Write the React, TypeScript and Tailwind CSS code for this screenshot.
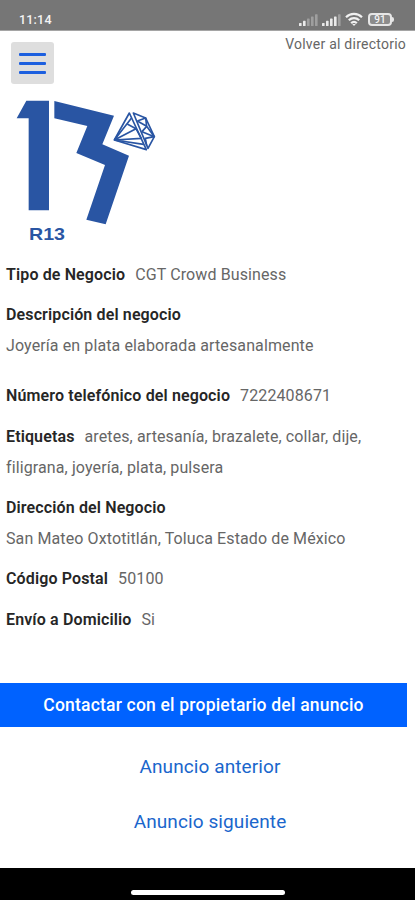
import React from "react";

interface Field {
  label: string;
  value: string;
  stacked?: boolean;
  className?: string;
}

const fields: Field[] = [
  { label: "Tipo de Negocio", value: "CGT Crowd Business" },
  {
    label: "Descripción del negocio",
    value: "Joyería en plata elaborada artesanalmente",
    stacked: true,
    className: "mb-2.5",
  },
  { label: "Número telefónico del negocio", value: "7222408671" },
  {
    label: "Etiquetas",
    value:
      "aretes, artesanía, brazalete, collar, dije, filigrana, joyería, plata, pulsera",
  },
  {
    label: "Dirección del Negocio",
    value: "San Mateo Oxtotitlán, Toluca Estado de México",
    stacked: true,
  },
  { label: "Código Postal", value: "50100" },
  { label: "Envío a Domicilio", value: "Si" },
];

const SignalBars = ({ active }: { active: number }) => (
  <svg viewBox="0 0 19 12" className="w-[19px] h-3" fill="#ffffff">
    {[0, 1, 2, 3, 4].map((i) => (
      <rect
        key={i}
        x={i * 4}
        y={9 - i * 2.2}
        width="2.6"
        height={3 + i * 2.2}
        rx="0.6"
        opacity={i < active ? 0.85 : 0.3}
      />
    ))}
  </svg>
);

const WifiIcon = () => (
  <svg
    viewBox="0 0 18 14"
    className="w-[18px] h-3.5"
    fill="none"
    stroke="#f1f1f1"
    strokeWidth="2.2"
  >
    <path d="M1 5.2a11.5 11.5 0 0 1 16 0" />
    <path d="M3.8 8.3a7.5 7.5 0 0 1 10.4 0" />
    <path d="M6.2 11.2a3.8 3.8 0 0 1 5.6 0" />
    <path d="M9 14l-1.8-2h3.6z" fill="#f1f1f1" stroke="none" />
  </svg>
);

const StatusBar = () => (
  <header className="flex h-[31px] items-start justify-between bg-[#767676] border-b border-[#a5a5a5] pl-[19px] pr-[21px] text-[#f4f4f4]">
    <span className="mt-3 text-[12.5px] leading-4 font-medium tracking-[0.2px]">
      11:14
    </span>
    <div className="mt-3 flex items-start">
      <div className="mt-0.5 flex gap-1">
        <SignalBars active={2} />
        <SignalBars active={4} />
      </div>
      <div className="ml-1">
        <WifiIcon />
      </div>
      <div className="ml-[5px] mt-px flex items-center">
        <div className="flex h-[13px] w-6 items-center justify-center rounded-[4px] border-2 border-[#e6e6e6] bg-[#8c8c8c] text-[10px] leading-none font-medium">
          91
        </div>
        <div className="h-[5px] w-0.5 rounded-r-sm bg-[#e6e6e6]" />
      </div>
    </div>
  </header>
);

const Logo = () => (
  <svg viewBox="0 0 510 510" className="block h-[170px] w-[170px]">
    <g fill="#2955a3">
      <path d="M50 100L79 47H147V376H86V100Z" />
      <path d="M163 48L342 92L307 178L387 212L317 418L259 404L315 240L229 204L262 123L163 100Z" />
      <text
        x="87"
        y="465"
        fontSize="49"
        fontWeight="700"
        textLength="108"
        lengthAdjust="spacingAndGlyphs"
        className="font-['Liberation_Sans',sans-serif]"
      >
        R13
      </text>
    </g>
    {/* diamond */}
    <g fill="none" stroke="#2955a3" strokeWidth="5" strokeLinejoin="round">
      <path d="M388 84L343 165L439 194Z" />
      <path d="M343 165L394 100M343 165L408 131L383 118M343 165L424 160L408 131M343 165L431 178" />
      <path d="M400 84L437 99L463 155L444 190Z" />
      <path d="M412 108L437 99L440 124L412 108M426 140L440 124L463 155L426 140M440 182L436 160L463 155" />
    </g>
  </svg>
);

const FieldRow = ({ label, value, stacked, className }: Field) => (
  <div className={className}>
    <span
      className={`font-semibold tracking-[0.13px] text-[#262626] ${stacked ? "block" : "mr-2.5"}`}
    >
      {label}
    </span>
    <span className="tracking-[0.11px] text-[#666666]">{value}</span>
  </div>
);

export default function App() {
  return (
    <div className="flex h-[900px] w-[415px] flex-col overflow-hidden bg-white font-[Roboto,sans-serif]">
      <StatusBar />

      <div className="flex h-[54px] items-start justify-between pl-[11px] pr-[9px]">
        <button className="mt-[11px] flex h-[42px] w-[43px] flex-col items-center justify-center gap-1.5 rounded-[3px] bg-[#dedede]">
          <span className="h-[3px] w-[27px] rounded-[1px] bg-[#1c5fdf]" />
          <span className="h-[3px] w-[27px] rounded-[1px] bg-[#1c5fdf]" />
          <span className="h-[3px] w-[27px] rounded-[1px] bg-[#1c5fdf]" />
        </button>
        <a className="mt-[3px] text-[14px] leading-5 tracking-[0.24px] text-[#666666]">
          Volver al directorio
        </a>
      </div>

      <Logo />

      <main className="mt-[4.6px] flex flex-col gap-2.5 pl-1.5 pr-8 text-[16px] leading-[30.6px]">
        {fields.map((field) => (
          <FieldRow key={field.label} {...field} />
        ))}
      </main>

      <div className="mt-auto flex h-[217px] flex-col">
        <button className="h-11 w-[407px] shrink-0 bg-[#0062ff] text-[17.5px] font-medium tracking-[0.2px] text-white">
          Contactar con el propietario del anuncio
        </button>
        <nav className="mt-[25px] flex flex-col items-center gap-[25px] pl-[5px] text-[19px] leading-[30px] tracking-[0.1px] text-[#1a66cc]">
          <a>Anuncio anterior</a>
          <a>Anuncio siguiente</a>
        </nav>
        <footer className="mt-auto flex h-8 shrink-0 justify-center bg-black pt-[22px]">
          <div className="h-[5px] w-[154px] rounded-full bg-white" />
        </footer>
      </div>
    </div>
  );
}
